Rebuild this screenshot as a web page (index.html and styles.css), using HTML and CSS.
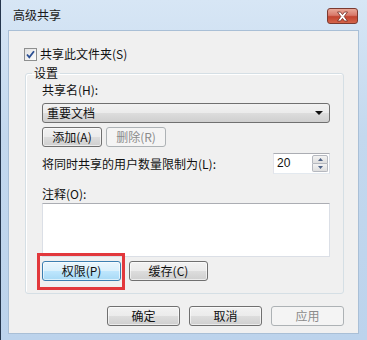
FILE: index.html
```html
<!DOCTYPE html>
<html>
<head>
    <title>高级共享</title>
    <link rel="stylesheet" href="styles.css">
</head>
<body>
    <div class="window">
        <!-- 标题栏 -->
        <div class="titlebar">
            <span class="title">高级共享</span>
            <span class="close">
                <svg width="13" height="11" viewBox="0 0 13 11">
                    <path d="M1.5 1 L4.5 1 L6.5 3.6 L8.5 1 L11.5 1 L8.2 5.5 L11.5 10 L8.5 10 L6.5 7.4 L4.5 10 L1.5 10 L4.8 5.5 Z" fill="#fff" stroke="#6e2a22" stroke-width="0.8"/>
                </svg>
            </span>
        </div>

        <div class="client">
            <label class="check-row">
                <span class="checkbox">
                    <svg width="11" height="11" viewBox="0 0 11 11">
                        <path d="M2 5.5 L4.3 8.3 L9 2.2" fill="none" stroke="#2b4f93" stroke-width="1.8"/>
                    </svg>
                </span>
                共享此文件夹(S)
            </label>

            <fieldset class="group">
                <legend>设置</legend>
                <div class="group-body">
                    <div class="label">共享名(H):</div>
                    <div class="combo">
                        <span>重要文档</span>
                        <svg width="8" height="4" viewBox="0 0 8 4"><path d="M0 0 L8 0 L4 4 Z" fill="#111"/></svg>
                    </div>
                    <div class="btn-row">
                        <span class="button small">添加(A)</span>
                        <span class="button small disabled">删除(R)</span>
                    </div>
                    <div class="limit-row">
                        <span>将同时共享的用户数量限制为(L):</span>
                        <span class="spin">
                            <span class="spin-value">20</span>
                            <span class="spin-btns">
                                <span class="spin-up"><svg width="5" height="3" viewBox="0 0 5 3"><path d="M0 3 L2.5 0 L5 3 Z" fill="#4d6185"/></svg></span>
                                <span class="spin-down"><svg width="5" height="3" viewBox="0 0 5 3"><path d="M0 0 L5 0 L2.5 3 Z" fill="#4d6185"/></svg></span>
                            </span>
                        </span>
                    </div>
                    <div class="label note-label">注释(O):</div>
                    <div class="memo"></div>
                    <div class="btn-row perm-row">
                        <span class="button wide focus">权限(P)</span>
                        <span class="button wide">缓存(C)</span>
                    </div>
                </div>
            </fieldset>

            <div class="footer">
                <span class="button footer-btn">确定</span>
                <span class="button footer-btn">取消</span>
                <span class="button footer-btn disabled">应用</span>
            </div>
        </div>
    </div>
</body>
</html>
```

FILE: styles.css
```css
/* 高级共享 对话框 */
body {
    margin: 0;
    font-family: "Noto Sans CJK SC", "DejaVu Sans", sans-serif;
    font-size: 12px;
    color: #111;
}
.window {
    width: 367px;
    height: 340px;
    box-sizing: border-box;
    border-left: 1px solid #25364d;
    background: linear-gradient(#d7e6f5, #c3d8ee 40%, #bcd3ec);
    padding: 0 8px 6px 7px;
    display: flex;
    flex-direction: column;
}
.titlebar {
    height: 30px;
    display: flex;
    align-items: center;
    justify-content: space-between;
}
.title {
    margin-left: 5px;
    line-height: 14px;
    color: #1b1b1b;
}
.close {
    width: 29px;
    height: 14px;
    margin-right: 1px;
    margin-top: 2px;
    border: 1px solid #7b3a30;
    border-radius: 3px;
    background: linear-gradient(#e9a898, #d8786a 45%, #c2432f 55%, #d4654b);
    display: flex;
    align-items: center;
    justify-content: center;
}
.client {
    flex: 1;
    background: #f0f0f0;
    border: 1px solid #a9bfd6;
    padding: 15px 14px 0 16px;
    display: flex;
    flex-direction: column;
}
.check-row {
    display: flex;
    align-items: center;
    height: 16px;
    line-height: 14px;
    margin-left: -1px;
}
.checkbox {
    width: 11px;
    height: 11px;
    border: 1px solid #8e8f8f;
    background: linear-gradient(135deg, #e1e1e1, #fdfdfd);
    margin-right: 3px;
    display: flex;
}
.group {
    margin: 4px 0 0 0;
    padding: 0;
    border: 1px solid #d5dfe5;
    border-radius: 3px;
    box-shadow: inset 1px 1px 0 #fff;
    min-width: 0;
}
.group legend {
    margin-left: 6px;
    padding: 0 2px;
    line-height: 14px;
}
.group-body {
    padding: 3px 13px 12px 16px;
}
.label {
    line-height: 14px;
}
.combo {
    margin-top: 6px;
    height: 18px;
    border: 1px solid #707070;
    border-radius: 3px;
    background: linear-gradient(#f2f2f2, #ebebeb 50%, #dddddd 51%, #cfcfcf);
    display: flex;
    align-items: center;
    justify-content: space-between;
    padding: 0 6px 0 4px;
    line-height: 14px;
}
.btn-row {
    display: flex;
    gap: 4px;
    margin-top: 4px;
}
.button {
    height: 18px;
    box-sizing: content-box;
    border: 1px solid #707070;
    border-radius: 3px;
    background: linear-gradient(#f2f2f2, #ebebeb 50%, #dddddd 51%, #cfcfcf);
    display: flex;
    align-items: center;
    justify-content: center;
    line-height: 14px;
    box-shadow: inset 0 0 0 1px rgba(255, 255, 255, 0.6);
}
.button.small {
    width: 58px;
}
.button.wide {
    width: 77px;
}
.button.disabled {
    border-color: #adb2b5;
    background: #f4f4f4;
    color: #8b8b8b;
    box-shadow: none;
}
.button.focus {
    border-color: #3c7fb1;
    background: linear-gradient(#eaf6fd, #d9f0fc 50%, #bee6fd 51%, #a7d9f5);
    position: relative;
}
/* 红色标注框 */
.button.focus::after {
    content: "";
    position: absolute;
    left: -6px;
    right: -5px;
    top: -9px;
    bottom: -10px;
    border: 3px solid #e2383c;
}
.limit-row {
    margin-top: 6px;
    display: flex;
    align-items: center;
    justify-content: space-between;
    height: 21px;
}
.spin {
    width: 55px;
    height: 19px;
    border: 1px solid #abadb3;
    border-color: #abadb3 #dbdfe6 #e3e9ef #e2e3ea;
    background: #fff;
    display: flex;
    justify-content: space-between;
}
.spin-value {
    padding-left: 3px;
    line-height: 19px;
    font-family: "Liberation Sans", Arial, sans-serif;
}
.spin-btns {
    width: 16px;
    display: flex;
    flex-direction: column;
    padding: 1px 1px 1px 0;
}
.spin-up, .spin-down {
    flex: 1;
    border: 1px solid #b5b8bf;
    background: linear-gradient(#f3f3f3, #dedede);
    display: flex;
    align-items: center;
    justify-content: center;
}
.spin-up {
    border-radius: 2px 2px 0 0;
}
.spin-down {
    border-top: none;
    border-radius: 0 0 2px 2px;
}
.note-label {
    margin-top: 13px;
}
.memo {
    margin-top: 2px;
    height: 52px;
    border: 1px solid #dbdfe6;
    border-top-color: #abadb3;
    background: #fff;
}
.perm-row {
    gap: 8px;
    margin-top: 4px;
}
.footer {
    display: flex;
    justify-content: flex-end;
    gap: 9px;
    margin-top: 12px;
}
.footer-btn {
    width: 71px;
}
```
